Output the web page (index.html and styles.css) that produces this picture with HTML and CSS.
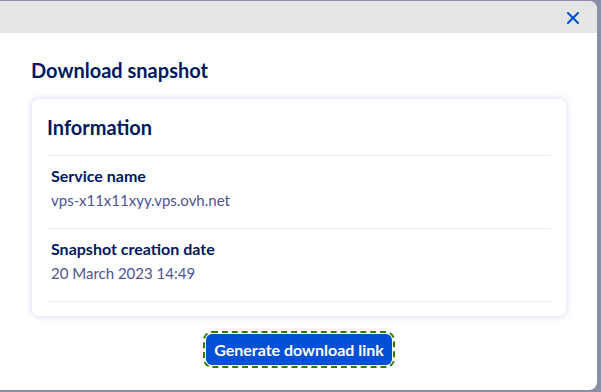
FILE: index.html
```html
<!DOCTYPE html>
<html lang="en">
<head>
<meta charset="utf-8">
<title>Download snapshot</title>
<link rel="stylesheet" href="styles.css">
</head>
<body>
<div class="modal">
  <div class="modal-header">
    <button class="close" aria-label="Close">
      <svg width="12" height="12" viewBox="0 0 12 12"><path d="M1 1L11 11M11 1L1 11" stroke="#0050d7" stroke-width="2" stroke-linecap="square"/></svg>
    </button>
  </div>
  <div class="modal-body">
    <h2 class="title">Download snapshot</h2>
    <div class="card">
      <h3 class="card-title">Information</h3>
      <div class="row">
        <div class="label">Service name</div>
        <div class="value">vps-x11x11xyy.vps.ovh.net</div>
      </div>
      <div class="row">
        <div class="label">Snapshot creation date</div>
        <div class="value">20 March 2023 14:49</div>
      </div>
    </div>
    <div class="actions">
      <button class="btn">Generate download link</button>
    </div>
  </div>
</div>
</body>
</html>
```

FILE: styles.css
```css
html, body {
  margin: 0;
  padding: 0;
  height: 392px;
  overflow: hidden;
}
body {
  background: #8a8ea6;
  font-family: Lato, "Open Sans", sans-serif;
  padding: 1px 4px 0 0;
  box-sizing: border-box;
}
.modal {
  margin-left: -10px;
  width: 607px;
  height: 389px;
  background: #fff;
  border-radius: 8px;
  overflow: hidden;
  display: flex;
  flex-direction: column;
}
.modal-header {
  height: 32px;
  background: #e5e5e5;
  display: flex;
  justify-content: flex-end;
  align-items: center;
  padding-right: 18px;
}
.close {
  background: none;
  border: 0;
  padding: 0;
  display: flex;
  margin-top: 1px;
}
.modal-body {
  padding: 0 0 0 41px;
  width: 536px;
}
.title {
  margin: 25px 0 0;
  font-size: 20px;
  font-weight: 700;
  color: #00185e;
  line-height: 24px;
}
.card {
  margin-top: 16px;
  border: 1px solid #ebebfa;
  border-radius: 8px;
  box-shadow: 0 0 5px 1px rgba(200, 200, 245, 0.45);
  padding: 14px 15px 14px;
}
.card-title {
  margin: 0;
  font-size: 20px;
  font-weight: 700;
  color: #00185e;
  line-height: 28px;
  padding-bottom: 14px;
  border-bottom: 1px solid #ececec;
}
.row {
  padding: 9px 4px 17px;
  border-bottom: 1px solid #ececec;
}
.label {
  font-size: 16px;
  font-weight: 700;
  color: #00185e;
  line-height: 22px;
}
.value {
  margin-top: 2px;
  font-size: 15px;
  color: #4d5592;
  line-height: 22px;
}
.actions {
  display: flex;
  justify-content: center;
  margin-top: 17px;
}
.btn {
  background: #0050d7;
  color: #fff;
  border: 0;
  border-radius: 6px;
  font-family: Lato, "Open Sans", sans-serif;
  font-size: 16px;
  font-weight: 700;
  height: 31px;
  padding: 0 8px;
  outline: 2px dashed #2b8000;
  outline-offset: 1px;
}
```
